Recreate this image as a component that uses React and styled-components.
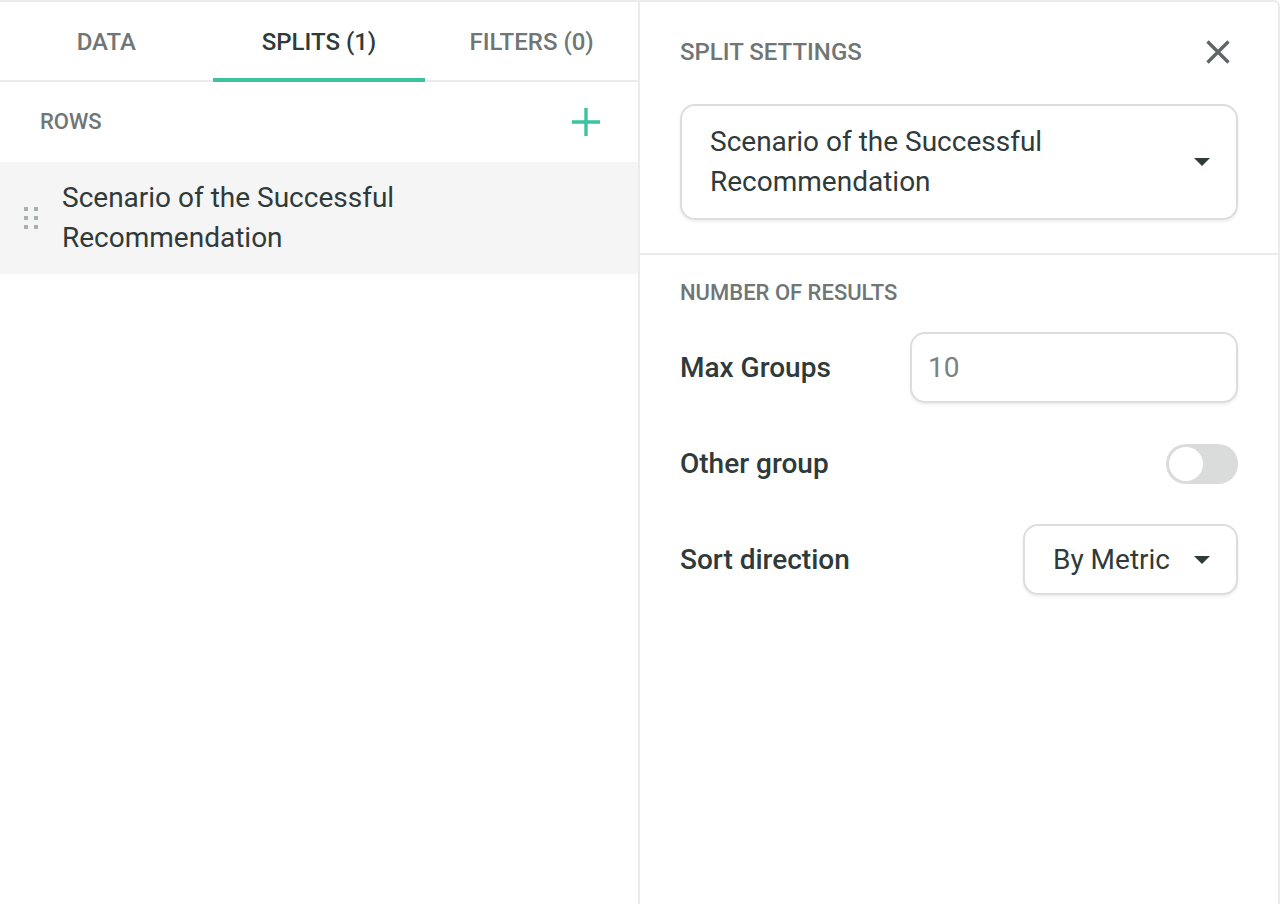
import React from "react";
import styled, { createGlobalStyle } from "styled-components";

const Global = createGlobalStyle`
  html, body { margin: 0; padding: 0; background: #fff; }
  body { font-family: Roboto, "Noto Sans", Arial, sans-serif; color: #2f3a3a; }
  * { box-sizing: border-box; }
`;

const Shell = styled.div`
  display: flex;
  width: 1280px;
  height: 904px;
  border-top: 2px solid #ebebeb;
  border-right: 2px solid #ebebeb;
  border-top-right-radius: 6px;
  overflow: hidden;
  background: #fff;
`;

const LeftPanel = styled.section`
  width: 640px;
  flex: none;
  display: flex;
  flex-direction: column;
  border-right: 2px solid #ebebeb;
`;

const RightPanel = styled.section`
  flex: 1;
  display: flex;
  flex-direction: column;
`;

const TabBar = styled.nav`
  display: grid;
  grid-template-columns: repeat(3, 1fr);
  height: 80px;
  border-bottom: 2px solid #ebebeb;
`;

const Tab = styled.div`
  position: relative;
  display: flex;
  align-items: center;
  justify-content: center;
  padding-top: 2px;
  font-size: 24px;
  font-weight: 500;
  text-transform: uppercase;
  color: ${(p) => (p.$active ? "#2f3a3a" : "#6f7675")};
  &::after {
    content: "";
    display: ${(p) => (p.$active ? "block" : "none")};
    position: absolute;
    left: 0;
    right: 0;
    bottom: -2px;
    height: 4px;
    background: #3cc4a0;
  }
`;

const SectionHeader = styled.div`
  display: flex;
  align-items: center;
  justify-content: space-between;
  height: 80px;
  padding: 0 38px 0 40px;
`;

const Overline = styled.div`
  font-size: ${(p) => p.$size || "22px"};
  font-weight: 500;
  text-transform: uppercase;
  color: #6f7675;
  line-height: 28px;
`;

const IconButton = styled.button`
  display: flex;
  align-items: center;
  justify-content: center;
  padding: 0;
  border: none;
  background: none;
  cursor: pointer;
`;

const RowItem = styled.div`
  display: flex;
  align-items: center;
  gap: 24px;
  background: #f5f5f5;
  padding: 16px 24px;
  min-height: 111px;
`;

const Handle = styled.div`
  display: grid;
  grid-template-columns: repeat(2, 4px);
  grid-auto-rows: 4px;
  column-gap: 6px;
  row-gap: 5px;
  span { background: #a9b0af; }
`;

const RowText = styled.div`
  font-size: 28px;
  line-height: 40px;
  max-width: 420px;
  color: #2f3a3a;
`;

const Section = styled.div`
  display: flex;
  flex-direction: column;
  padding: ${(p) => p.$pad};
  gap: ${(p) => p.$gap};
  border-bottom: ${(p) => (p.$divider ? "2px solid #ebebeb" : "none")};
`;

const HeaderRow = styled.div`
  display: flex;
  align-items: center;
  justify-content: space-between;
  height: 56px;
  padding-right: 8px;
`;

const Box = styled.div`
  display: flex;
  align-items: center;
  border: 2px solid #dcdedd;
  border-radius: 15px;
  background: #fff;
  box-shadow: 0 2px 3px rgba(0, 0, 0, 0.07);
  font-size: 28px;
  color: ${(p) => (p.$muted ? "#7a8180" : "#2f3a3a")};
  width: ${(p) => p.$width || "auto"};
  min-height: 71px;
  padding: ${(p) => p.$pad || "0 26px 0 28px"};
  gap: 24px;
`;

const BoxText = styled.div`
  flex: 1;
  line-height: 40px;
`;

const Caret = styled.span`
  width: 0;
  height: 0;
  border-left: 8px solid transparent;
  border-right: 8px solid transparent;
  border-top: 8px solid #2f3a3a;
  flex: none;
`;

const FieldRow = styled.div`
  display: flex;
  align-items: center;
  justify-content: space-between;
  min-height: 71px;
`;

const Label = styled.div`
  font-size: 28px;
  font-weight: 500;
  color: #2f3a3a;
`;

const Toggle = styled.div`
  width: 72px;
  height: 40px;
  border-radius: 20px;
  background: #d9dcdb;
  padding: 3px;
  display: flex;
  justify-content: ${(p) => (p.$on ? "flex-end" : "flex-start")};
`;

const Knob = styled.div`
  width: 34px;
  height: 34px;
  border-radius: 50%;
  background: #fff;
`;

function PlusIcon() {
  return (
    <svg width="28" height="28" viewBox="0 0 28 28">
      <path d="M14 0v28M0 14h28" stroke="#3cc4a0" strokeWidth="3.4" />
    </svg>
  );
}

function CloseIcon() {
  return (
    <svg width="24" height="24" viewBox="0 0 24 24">
      <path d="M1.5 1.5l21 21M22.5 1.5l-21 21" stroke="#5f6766" strokeWidth="3.4" />
    </svg>
  );
}

export default function App() {
  return (
    <>
      <Global />
      <Shell>
        <LeftPanel>
          <TabBar>
            <Tab>Data</Tab>
            <Tab $active>Splits (1)</Tab>
            <Tab>Filters (0)</Tab>
          </TabBar>
          <SectionHeader>
            <Overline>Rows</Overline>
            <IconButton aria-label="Add row">
              <PlusIcon />
            </IconButton>
          </SectionHeader>
          <RowItem>
            <Handle>
              <span /><span /><span /><span /><span /><span />
            </Handle>
            <RowText>Scenario of the Successful Recommendation</RowText>
          </RowItem>
        </LeftPanel>
        <RightPanel>
          <Section $pad="22px 40px 33px" $gap="24px" $divider>
            <HeaderRow>
              <Overline $size="24px">Split settings</Overline>
              <IconButton aria-label="Close">
                <CloseIcon />
              </IconButton>
            </HeaderRow>
            <Box $pad="16px 26px 16px 28px">
              <BoxText>Scenario of the Successful Recommendation</BoxText>
              <Caret />
            </Box>
          </Section>
          <Section $pad="24px 40px" $gap="25px">
            <Overline>Number of results</Overline>
            <FieldRow>
              <Label>Max Groups</Label>
              <Box $width="328px" $muted $pad="0 16px">
                <BoxText>10</BoxText>
              </Box>
            </FieldRow>
            <FieldRow>
              <Label>Other group</Label>
              <Toggle>
                <Knob />
              </Toggle>
            </FieldRow>
            <FieldRow>
              <Label>Sort direction</Label>
              <Box $pad="0 26px 0 28px">
                <BoxText>By Metric</BoxText>
                <Caret />
              </Box>
            </FieldRow>
          </Section>
        </RightPanel>
      </Shell>
    </>
  );
}
